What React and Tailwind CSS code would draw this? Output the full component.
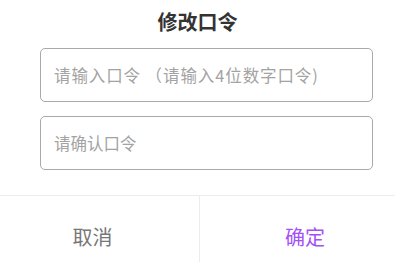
import React from "react";

export default function App() {
  const font = { fontFamily: '"Noto Sans CJK SC", "Noto Sans", sans-serif' };
  return (
    <div className="w-[395px] h-[262px] bg-white overflow-hidden" style={font}>
      <div className="h-[44px] flex items-center justify-center text-[20px] font-bold text-[#333] leading-none">
        修改口令
      </div>
      <div className="pl-[40px] pr-[22px] pt-[4px] flex flex-col gap-[14px]">
        <input
          readOnly
          placeholder="请输入口令 （请输入4位数字口令)"
          className="h-[54px] w-full border border-[#a9a9a9] rounded-[5px] px-[13px] text-[16.5px] tracking-[0.9px] outline-none placeholder:text-[#a3a3a3]"
          style={font}
        />
        <input
          readOnly
          placeholder="请确认口令"
          className="h-[54px] w-full border border-[#a9a9a9] rounded-[5px] px-[13px] text-[16.5px] outline-none placeholder:text-[#a3a3a3]"
          style={font}
        />
      </div>
      <div className="mt-[25px] border-t border-[#ececec] flex h-[82px]">
        <div className="w-[200px] border-r border-[#ececec] flex items-center justify-center pr-[14px] text-[20px] text-[#777]">
          取消
        </div>
        <div className="flex-1 flex items-center justify-center pl-[15px] text-[20px] text-[#a550f6]">
          确定
        </div>
      </div>
    </div>
  );
}
